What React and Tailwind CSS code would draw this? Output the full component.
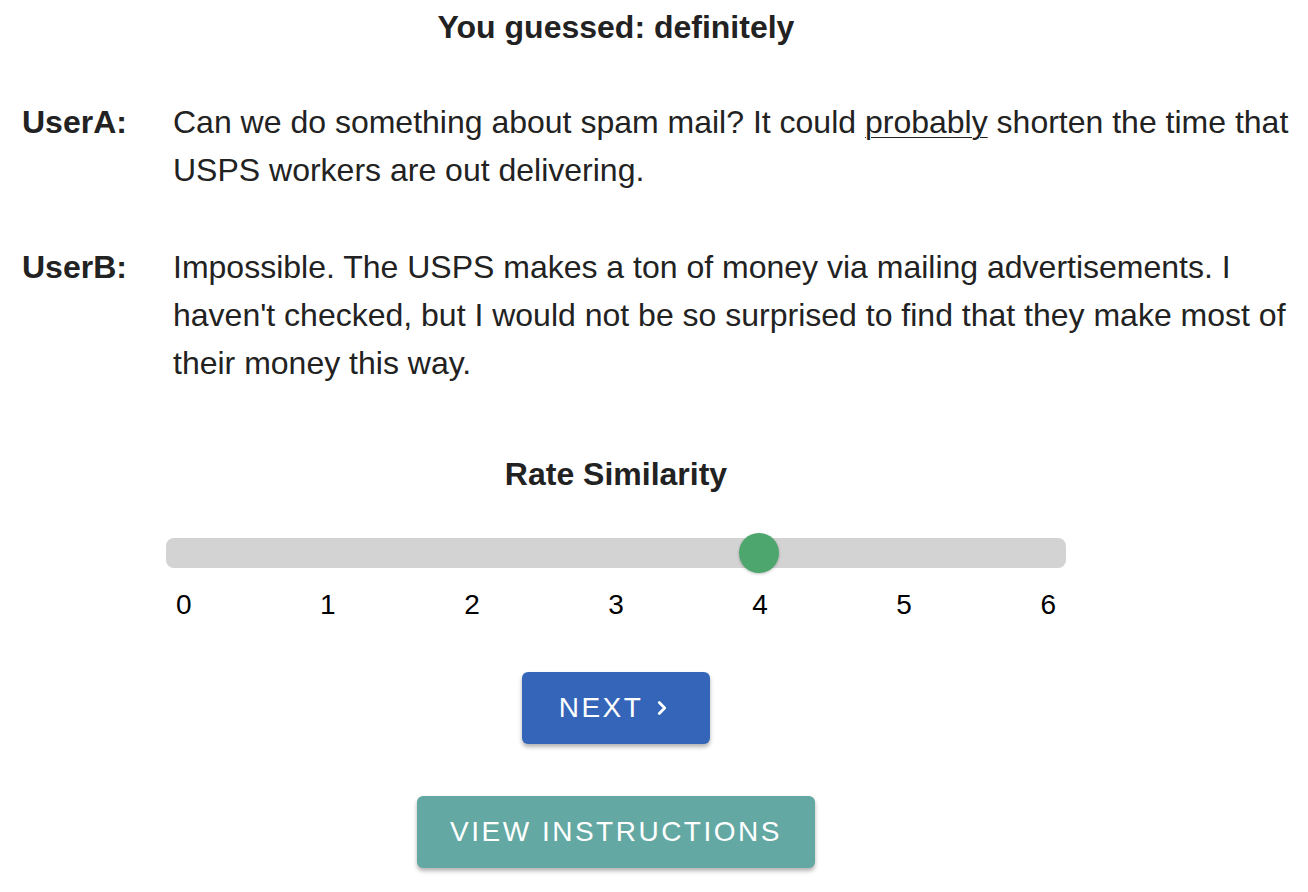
import { ChevronRight } from "lucide-react";

const font = { fontFamily: '"Liberation Sans", Arial, sans-serif' };

function Turn({ speaker, children }) {
  return (
    <div className="flex items-start">
      <div className="w-[173px] shrink-0 pl-[22px] font-bold text-[#222]">{speaker}:</div>
      <div className="flex-1 text-[#222] pr-[10px]">{children}</div>
    </div>
  );
}

export default function App() {
  const labels = [0, 1, 2, 3, 4, 5, 6];
  return (
    <div className="w-[1308px] h-[892px] bg-white overflow-hidden text-[32px] leading-[48px]" style={font}>
      <div className="w-[1232px] flex flex-col items-center pt-[3px]">
        <h2 className="font-bold text-[#222]">You guessed: definitely</h2>
      </div>

      <div className="mt-[47px] flex flex-col gap-[49px] w-[1308px]">
        <Turn speaker="UserA">
          Can we do something about spam mail? It could <span className="underline underline-offset-4 decoration-1">probably</span> shorten the time that USPS workers are out delivering.
        </Turn>
        <Turn speaker="UserB">
          Impossible. The USPS makes a ton of money via mailing advertisements. I haven't checked, but I would not be so surprised to find that they make most of their money this way.
        </Turn>
      </div>

      <div className="w-[1232px] flex flex-col items-center mt-[63px]">
        <h3 className="font-bold text-[#222]">Rate Similarity</h3>

        <div className="mt-[40px] w-[900px]">
          <div className="relative h-[30px] rounded-lg bg-[#d3d3d3]">
            <div className="absolute left-[573px] top-[-5px] w-[40px] h-[40px] rounded-full bg-[#4ea66f] shadow-[0_1px_3px_rgba(0,0,0,0.25)]" />
          </div>
          <div className="mt-[13px] flex justify-between px-[10px] text-black text-[28px]">
            {labels.map((n) => (
              <span key={n}>{n}</span>
            ))}
          </div>
        </div>

        <button className="mt-[43px] w-[188px] h-[72px] rounded-md bg-[#3465b9] text-white text-[28px] uppercase tracking-[2.5px] flex items-center justify-center gap-[8px] shadow-[0_3px_4px_rgba(0,0,0,0.3)]">
          <span>Next</span>
          <ChevronRight size={22} strokeWidth={3} />
        </button>

        <button className="mt-[52px] w-[398px] h-[72px] rounded-md bg-[#63a8a3] text-white text-[28px] uppercase tracking-[2.5px] flex items-center justify-center shadow-[0_3px_4px_rgba(0,0,0,0.3)]">
          View Instructions
        </button>
      </div>
    </div>
  );
}
